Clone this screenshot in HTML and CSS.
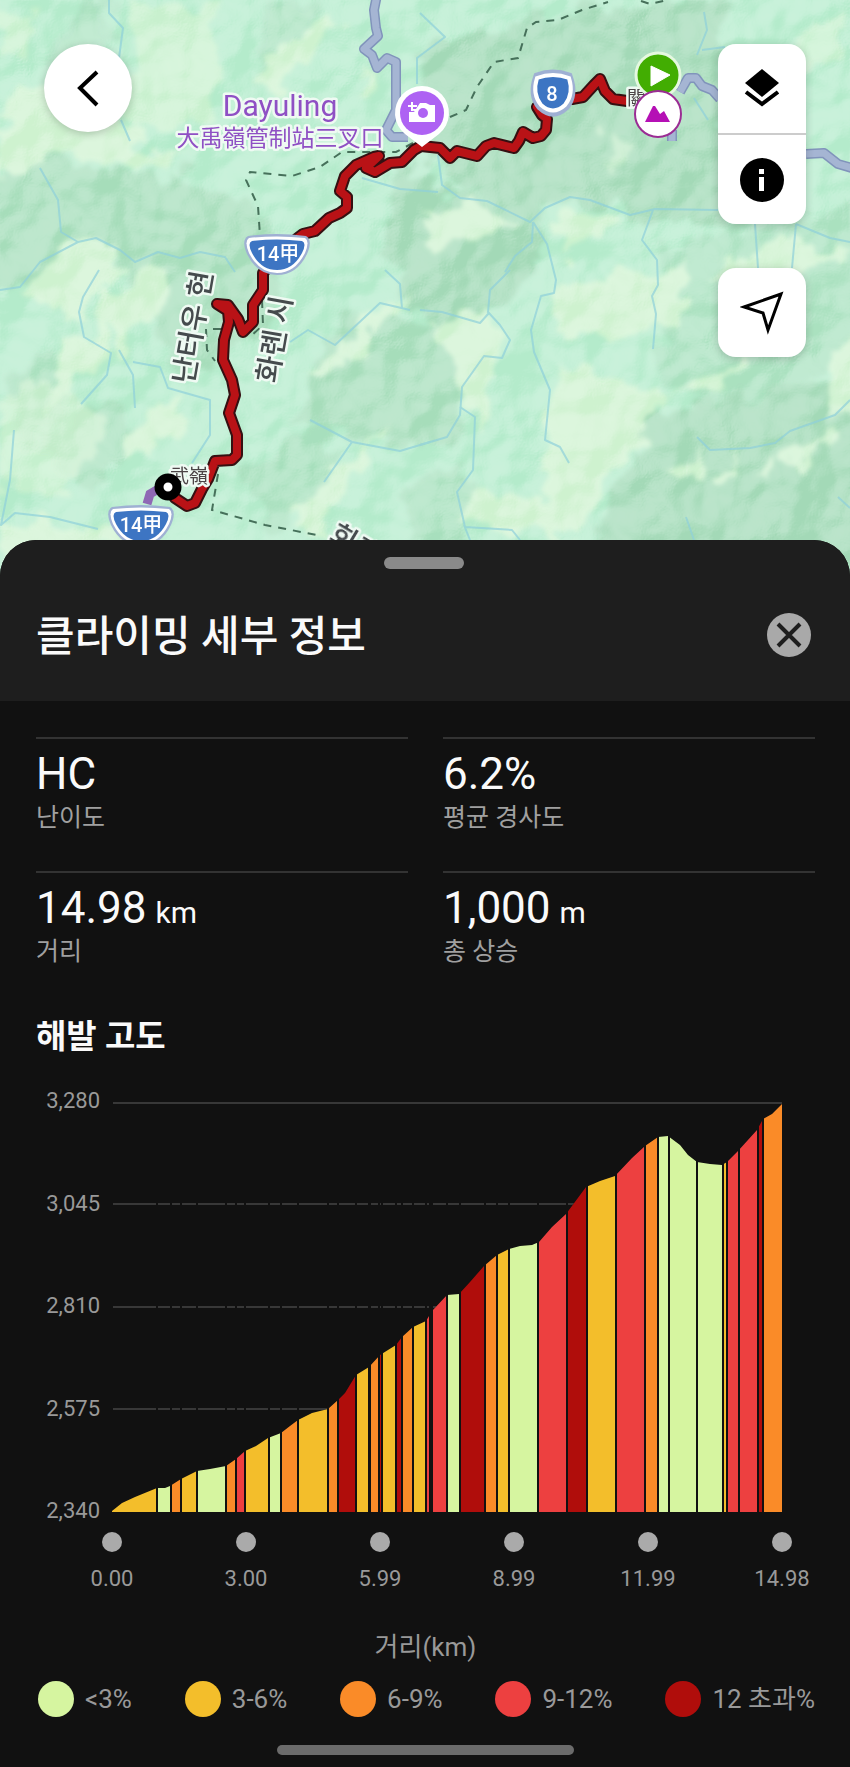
FILE: index.html
```html
<!DOCTYPE html>
<html lang="ko">
<head>
  <meta charset="UTF-8" />
  <meta name="viewport" content="width=device-width, initial-scale=1.0"/>
  <title>클라이밍 세부 정보</title>
  <link rel="stylesheet" href="styles.css">
</head>
<body>
  <div class="map">
    <svg class="map-canvas" viewBox="0 0 850 576" preserveAspectRatio="xMidYMin slice" role="img" aria-label="지도">
      <defs>
        <filter id="terrain" x="-5%" y="-5%" width="110%" height="110%">
          <feTurbulence type="fractalNoise" baseFrequency="0.035" numOctaves="3" seed="4" result="noise"/>
          <feDisplacementMap in="SourceGraphic" in2="noise" scale="44" xChannelSelector="R" yChannelSelector="G"/>
          <feGaussianBlur stdDeviation="2"/>
        </filter>
        <filter id="relief" x="0" y="0" width="100%" height="100%" color-interpolation-filters="sRGB">
          <feTurbulence type="fractalNoise" baseFrequency="0.016" numOctaves="3" seed="11" result="noise"/>
          <feColorMatrix in="noise" type="matrix" values="0 0 0 0 0  0 0 0 0 0  0 0 0 0 0  1 0 0 0 0" result="height"/>
          <feDiffuseLighting in="height" surfaceScale="34" diffuseConstant="0.75" lighting-color="#ffffff">
            <feDistantLight azimuth="225" elevation="42"/>
          </feDiffuseLighting>
        </filter>
        <g id="shield-wide">
          <path d="M-29 -18 Q0 -22 29 -18 Q36 -14 30 0 Q20 21 0 21 Q-20 21 -30 0 Q-36 -14 -29 -18Z" fill="#9fb0d3"/>
          <path d="M-28 -16 Q0 -19 28 -16 Q33 -13 28 -1 Q18 19 0 19 Q-18 19 -28 -1 Q-33 -13 -28 -16Z" fill="#fff"/>
          <path d="M-25 -13 Q0 -16 25 -13 Q30 -11 25 -1 Q16 16 0 16 Q-16 16 -25 -1 Q-30 -11 -25 -13Z" fill="#3d75c3"/>
        </g>
      </defs>

      <!-- terrain -->
      <rect width="850" height="576" fill="#c4f0d7"/>
      <g filter="url(#terrain)">
        <g fill="#b5e2c6">
          <path d="M-10 175 L60 160 L190 178 L250 200 L290 250 L270 330 L180 380 L120 250 L60 280 L-10 290Z" opacity=".8"/>
          <path d="M420 50 L560 10 L720 0 L720 90 L740 230 L640 215 L570 200 L530 220 L460 190 L420 160Z"/>
          <path d="M400 160 L450 190 L540 225 L540 270 L490 310 L430 320 L380 260Z"/>
          <path d="M340 310 L470 330 L460 430 L400 450 L330 420 L290 420Z" opacity=".8"/>
          <path d="M650 410 L720 400 L860 380 L860 570 L580 570 L620 500Z"/>
          <path d="M660 250 L860 200 L860 350 L740 420 L660 380Z" opacity=".6"/>
          <path d="M40 440 L110 400 L150 430 L90 500Z M10 380 L50 350 L70 410 L20 450Z" opacity=".7"/>
          <path d="M240 480 L330 410 L340 480 L280 530Z M410 480 L470 470 L470 540 L410 550Z" opacity=".7"/>
          <path d="M80 0 L115 0 L110 60 L60 120 L40 70Z M280 0 L320 0 L290 60 L250 90Z" opacity=".5"/>
        </g>
        <g fill="#d9f5da">
          <path d="M0 100 L60 70 L150 150 L190 165 L60 158 L0 180Z"/>
          <path d="M130 5 L220 10 L215 120 L130 130Z M0 10 L35 15 L25 60 L0 60Z" opacity=".75"/>
          <path d="M250 75 L320 15 L345 25 L275 90Z M350 100 L385 70 L370 100Z"/>
          <path d="M40 270 L80 240 L105 243 L130 270 L80 315 L20 300Z M100 300 L150 270 L170 290 L120 350Z"/>
          <path d="M60 350 L120 310 L100 360 L50 410Z M120 440 L190 390 L180 430 L130 460Z"/>
          <path d="M300 385 L370 310 L420 290 L350 360Z M290 520 L380 430 L345 500 L320 530Z"/>
          <path d="M420 220 L460 205 L520 225 L440 250Z M560 210 L630 220 L560 260Z"/>
          <path d="M545 290 L690 260 L680 330 L560 340Z M560 370 L665 390 L640 440 L560 550 L540 470Z"/>
          <path d="M430 320 L490 310 L500 380 L475 440 L465 390Z M470 490 L560 500 L570 530 L460 530Z"/>
          <path d="M670 395 L760 350 L720 390Z M700 280 L780 240 L850 260 L770 285Z M670 475 L700 455 L690 480Z M705 475 L735 450 L720 480Z M755 475 L780 450 L770 478Z M780 465 L830 425 L810 460Z"/>
          <path d="M770 55 L850 10 L850 50 L780 95Z M600 130 L640 150 L610 170Z M0 400 L40 380 L110 430 L60 500 L0 490Z" opacity=".7"/>
          <path d="M830 370 L860 330 L860 420 L830 415Z M0 515 L130 530 L100 560 L0 560Z"/>
        </g>
      </g>
      <rect class="relief" width="850" height="576" filter="url(#relief)"/>

      <!-- rivers -->
      <g class="river">
        <path d="M109 0 V13 L123 28 L119 58 M121 120 L130 141"/>
        <path d="M40 168 L58 200 L61 232 L78 242 L96 238 L120 250 L135 262 L158 252 L180 258 L200 252 L225 257 L235 272"/>
        <path d="M0 290 L20 287 L40 262 L78 242 M99 270 L83 297 L79 312 L84 337 L111 353 L107 375 L81 404 M119 350 L133 375 L135 408 M133 362 L160 367 L168 388 L210 400 L210 435 L192 463"/>
        <path d="M14 430 L10 480 L1 525 L15 513 L50 517 L98 529"/>
        <path d="M420 13 L445 37 L417 58 L417 84 M438 155 L442 185 L460 198 L487 201 L530 222 L545 208 L570 197 L590 200 L630 215 L655 209 L718 210"/>
        <path d="M362 178 L400 189 L438 192 M533 222 L547 244 L556 280 L554 293 L541 296 L531 330 L534 352 L550 390 L545 440 L560 447 L569 463"/>
        <path d="M653 210 L642 240 L657 260 L658 285 L652 296 L656 314 L653 349 M755 224 L758 268 M796 224 L792 268 M796 224 L830 238 L850 242"/>
        <path d="M510 270 L490 290 L488 312 L500 325 L510 340 L502 358 L484 356 L462 387 L460 415 L447 437 L420 445 M533 222 L532 242 L515 256 L505 272"/>
        <path d="M420 310 L442 312 L480 323 L489 313 M460 407 L475 417 L473 470 L457 492 L465 527 L512 530 L520 540 M464 525 L470 540"/>
        <path d="M704 12 L707 30 L697 55 M702 50 L725 47 M694 98 L708 120 M697 437 L710 450 L750 448 L775 443 L790 431 L835 415 L850 400"/>
        <path d="M290 342 L308 330 L335 345 L380 303 L410 310 M402 308 L400 284 L385 270 M310 420 L352 442 L400 451 L430 442 M352 442 L324 482 M686 517 L694 540 M838 497 L850 508"/>
      </g>

      <!-- borders -->
      <g class="border">
        <path d="M413 143 L396 152 L342 152 L320 167 L292 176 L250 172 L246 180 L258 206 L260 236"/>
        <path d="M450 117 L466 110 L477 87 L494 62 L518 58 L527 28 L536 22 L558 20 L582 10 L608 2 M641 1 L650 4 L668 0"/>
        <path d="M262 300 L263 325 L250 337 M221 329 L206 329 L207 350 L215 361 M218 474 L212 510 L265 525 L322 536"/>
      </g>

      <!-- roads -->
      <g class="road">
        <path d="M377 -5 L374 10 L376 28 L378 36 L364 49 L372 55 L377 68 L387 58 L396 62 L396 110 L390 122 L386 130 L392 137 L408 137"/>
        <path d="M680 92 L688 78 L696 78 L702 86 L712 90 L720 99 M672 130 V141 M806 154 L824 153 L838 164 L852 168"/>
      </g>
      <g class="road road-inner">
        <path d="M377 -5 L374 10 L376 28 L378 36 L364 49 L372 55 L377 68 L387 58 L396 62 L396 110 L390 122 L386 130 L392 137 L408 137"/>
        <path d="M680 92 L688 78 L696 78 L702 86 L712 90 L720 99 M672 130 V141 M806 154 L824 153 L838 164 L852 168"/>
      </g>
      <path d="M160 488 L150 494 L147 504" fill="none" stroke="#8f68b5" stroke-width="9"/>

      <!-- climb route -->
      <g class="route">
        <path d="M627 101 L613 99 L605 91 L600 79 L594 85 L583 97 L572 99 M537 107 L542 115 L547 119 L546 130 L541 136 L533 138 L523 132 L519 141 L514 148 L494 143 L486 146 L477 156 L457 151 L450 158 L440 148 L421 146 L414 150 L402 162 L390 163 L375 172 L366 168 L379 156 L374 157 L356 165 L345 176 L340 191 L347 197 L347 208 L340 213 L329 218 L315 231 L303 234 L281 251 L263 273 L263 290 L253 305 L253 322 L243 332 L238 319 L228 305 L217 304 L228 311 L229 322 L224 340 L223 360 L232 380 L235 395 L229 413 L237 435 L237 455 L232 460 L215 461 L208 479 L202 489 L195 503 L187 506 L175 498 L168 487"/>
        <path class="route-inner" d="M627 101 L613 99 L605 91 L600 79 L594 85 L583 97 L572 99 M537 107 L542 115 L547 119 L546 130 L541 136 L533 138 L523 132 L519 141 L514 148 L494 143 L486 146 L477 156 L457 151 L450 158 L440 148 L421 146 L414 150 L402 162 L390 163 L375 172 L366 168 L379 156 L374 157 L356 165 L345 176 L340 191 L347 197 L347 208 L340 213 L329 218 L315 231 L303 234 L281 251 L263 273 L263 290 L253 305 L253 322 L243 332 L238 319 L228 305 L217 304 L228 311 L229 322 L224 340 L223 360 L232 380 L235 395 L229 413 L237 435 L237 455 L232 460 L215 461 L208 479 L202 489 L195 503 L187 506 L175 498 L168 487"/>
      </g>

      <!-- place names -->
      <text class="poi" x="280" y="116" font-size="30">Dayuling</text>
      <text class="poi" x="280" y="146" font-size="23">大禹嶺管制站三叉口</text>
      <text class="region" transform="translate(193 385) rotate(-80)">난터우 현</text>
      <text class="region" transform="translate(277 384) rotate(-80)">화롄 시</text>
      <text class="region" transform="translate(327 541) rotate(31)">화롄 시</text>
      <text class="village" x="170" y="483">武嶺</text>
      <text class="village" x="627" y="105">關</text>

      <!-- road shields -->
      <use href="#shield-wide" x="277" y="254"/>
      <text class="shield-text" x="278" y="261">14甲</text>
      <use href="#shield-wide" x="141" y="525"/>
      <text class="shield-text" x="141" y="532">14甲</text>
      <path d="M537 76 Q553 70 569 76 Q576 95 566 107 Q553 119 540 107 Q530 95 537 76Z" fill="#3d75c3" stroke="#9fb0d3" stroke-width="7"/>
      <path d="M537 78 Q553 72 569 78 Q574 94 565 105 Q553 116 541 105 Q532 94 537 78Z" fill="#3d75c3" stroke="#fff" stroke-width="4"/>
      <text class="shield-text" x="552" y="101">8</text>

      <!-- camera pin -->
      <path d="M422 147 L405 134 A27 27 0 1 1 439 134Z" fill="#fff"/>
      <circle cx="422" cy="113" r="22" fill="#ae62f3"/>
      <path d="M411 109 H416 L420 103 H426 L430 105 H435 V122 H409 V112 H415Z" fill="#fff"/>
      <path d="M412 102 V111 M408 106 H417" stroke="#fff" stroke-width="2"/>
      <circle cx="423" cy="113" r="5" fill="#ae62f3"/>

      <!-- climb start and summit -->
      <circle cx="658" cy="75" r="22" fill="#42ad02" stroke="#e5f8e0" stroke-width="3"/>
      <path d="M651 66 L670 75 L651 86Z" fill="#fff" stroke="#fff"/>
      <circle cx="658" cy="114" r="23" fill="#fff" stroke="#9b2c94" stroke-width="2"/>
      <path d="M645 122 L653 106 L655 106 L660 114 L664 111 L670 122Z" fill="#b510b5"/>
      <circle cx="168" cy="487" r="9" fill="#fff" stroke="#000" stroke-width="9"/>
    </svg>

    <button class="map-btn back-btn" type="button" aria-label="뒤로">
      <svg width="44" height="44" viewBox="0 0 44 44"><path d="M31 6 L14 22 L31 39" fill="none" stroke="#000" stroke-width="4"/></svg>
    </button>
    <div class="map-controls">
      <div class="btn-group">
        <button class="map-btn" type="button" aria-label="레이어">
          <svg width="44" height="44" viewBox="0 0 44 44"><path d="M22 2 L39 16 L22 30 L5 16Z"/><path d="M6 25 L22 37 L38 25" fill="none" stroke="#000" stroke-width="4"/></svg>
        </button>
        <button class="map-btn" type="button" aria-label="정보">
          <svg width="44" height="44" viewBox="0 0 44 44"><circle cx="22" cy="22" r="22"/><path d="M19 11 H24 V16 H19Z M19 19 H24 V33 H19Z" fill="#fff"/></svg>
        </button>
      </div>
      <button class="map-btn locate-btn" type="button" aria-label="현재 위치">
        <svg width="44" height="44" viewBox="0 0 44 44"><path d="M4 16 L41 3 L28 39 L23 22Z" fill="none" stroke="#000" stroke-width="3"/></svg>
      </button>
    </div>
  </div>

  <main class="sheet">
    <header class="sheet-header">
      <div class="handle"></div>
      <div class="title-row">
        <h1>클라이밍 세부 정보</h1>
        <button class="close-btn" type="button" aria-label="닫기">
          <svg width="44" height="44" viewBox="0 0 44 44"><circle cx="22" cy="22" r="22" fill="#a9a9a9"/><path d="M11 11 L33 33 M33 11 L11 33" stroke="#1e1e1e" stroke-width="4"/></svg>
        </button>
      </div>
    </header>

    <div class="sheet-body">
      <dl class="stats">
        <div class="stat"><dd>HC</dd><dt>난이도</dt></div>
        <div class="stat"><dd>6.2%</dd><dt>평균 경사도</dt></div>
        <div class="stat"><dd>14.98 <small>km</small></dd><dt>거리</dt></div>
        <div class="stat"><dd>1,000 <small>m</small></dd><dt>총 상승</dt></div>
      </dl>

      <h2>해발 고도</h2>

      <div class="chart">
        <div class="y-axis">
          <span>3,280</span>
          <span>3,045</span>
          <span>2,810</span>
          <span>2,575</span>
          <span>2,340</span>
        </div>
        <div class="chart-main">
          <svg class="plot" viewBox="112 1103 670 410" preserveAspectRatio="none" role="img" aria-label="해발 고도 그래프">
            <defs>
              <clipPath id="profile">
                <path d="M112 1512 L122 1504 L135 1498 L157 1489 L165 1489 L170 1487 L181 1480 L197 1472 L210 1470 L226 1467 L236 1460 L245 1452 L256 1447 L268 1439 L281 1434 L290 1427 L298 1421 L312 1414 L328 1410 L338 1401 L345 1394 L356 1376 L369 1368 L380 1356 L396 1346 L402 1338 L413 1328 L426 1322 L432 1312 L447 1296 L459 1295 L470 1283 L484 1267 L497 1256 L509 1250 L520 1247 L532 1246 L539 1243 L552 1228 L566 1215 L586 1188 L600 1182 L615 1177 L632 1159 L645 1147 L658 1138 L668 1137 L680 1146 L688 1156 L697 1163 L710 1165 L722 1166 L727 1163 L738 1152 L757 1131 L763 1120 L772 1115 L782 1105 V1513 H112Z"/>
              </clipPath>
            </defs>
            <path class="grid" d="M113 1205 H782 M113 1308 H782 M113 1410 H782"/>
            <g clip-path="url(#profile)">
              <rect x="112" y="1103" width="670" height="410" fill="#111"/>
              <path class="g3" d="M112 1103 H157 V1513 H112Z M181 1103 H197 V1513 H181Z M245 1103 H269 V1513 H245Z M298 1103 H328 V1513 H298Z M356 1103 H369 V1513 H356Z M381 1103 H396 V1513 H381Z M413 1103 H426 V1513 H413Z M497 1103 H509 V1513 H497Z M587 1103 H616 V1513 H587Z M723 1103 H727 V1513 H723Z"/>
              <path class="g0" d="M157 1103 H171 V1513 H157Z M197 1103 H226 V1513 H197Z M269 1103 H281 V1513 H269Z M447 1103 H460 V1513 H447Z M509 1103 H538 V1513 H509Z M658 1103 H723 V1513 H658Z"/>
              <path class="g6" d="M171 1103 H181 V1513 H171Z M226 1103 H236 V1513 H226Z M281 1103 H298 V1513 H281Z M328 1103 H338 V1513 H328Z M369 1103 H379 V1513 H369Z M402 1103 H413 V1513 H402Z M485 1103 H497 V1513 H485Z M645 1103 H658 V1513 H645Z M763 1103 H782 V1513 H763Z"/>
              <path class="g9" d="M236 1103 H245 V1513 H236Z M426 1103 H430 V1513 H426Z M432 1103 H447 V1513 H432Z M538 1103 H567 V1513 H538Z M616 1103 H645 V1513 H616Z M727 1103 H758 V1513 H727Z"/>
              <path class="g12" d="M338 1103 H356 V1513 H338Z M379 1103 H382 V1513 H379Z M396 1103 H402 V1513 H396Z M430 1103 H433 V1513 H430Z M460 1103 H485 V1513 H460Z M567 1103 H587 V1513 H567Z M758 1103 H763 V1513 H758Z"/>
            </g>
            <!-- segment gaps -->
            <path class="gaps" d="M157 1106 V1513 M171 1106 V1513 M181 1106 V1513 M197 1106 V1513 M226 1106 V1513 M236 1106 V1513 M245 1106 V1513 M269 1106 V1513 M281 1106 V1513 M298 1106 V1513 M328 1106 V1513 M338 1106 V1513 M356 1106 V1513 M369 1106 V1513 M370 1106 V1513 M379 1106 V1513 M382 1106 V1513 M396 1106 V1513 M402 1106 V1513 M413 1106 V1513 M426 1106 V1513 M430 1106 V1513 M432 1106 V1513 M447 1106 V1513 M460 1106 V1513 M485 1106 V1513 M497 1106 V1513 M509 1106 V1513 M538 1106 V1513 M567 1106 V1513 M587 1106 V1513 M616 1106 V1513 M645 1106 V1513 M658 1106 V1513 M669 1106 V1513 M697 1106 V1513 M723 1106 V1513 M727 1106 V1513 M739 1106 V1513 M758 1106 V1513 M763 1106 V1513"/>
            <path class="grid" d="M113 1104 H782"/>
          </svg>
          <div class="x-axis">
            <span>0.00</span>
            <span>3.00</span>
            <span>5.99</span>
            <span>8.99</span>
            <span>11.99</span>
            <span>14.98</span>
          </div>
        </div>
      </div>
      <p class="axis-title">거리(km)</p>

      <ul class="legend">
        <li><i class="dot dot-0"></i>&lt;3%</li>
        <li><i class="dot dot-3"></i>3-6%</li>
        <li><i class="dot dot-6"></i>6-9%</li>
        <li><i class="dot dot-9"></i>9-12%</li>
        <li><i class="dot dot-12"></i>12 초과%</li>
      </ul>
      <div class="home-bar"></div>
    </div>
  </main>
</body>
</html>
```

FILE: styles.css
```css
* {
  box-sizing: border-box;
}

body {
  margin: 0;
  background: #111;
  color: #fafafa;
  font-family: Roboto, "Noto Sans CJK KR", sans-serif;
}

/* Map */
.map {
  position: relative;
  height: 576px;
}

.map-canvas {
  display: block;
  width: 100%;
  height: 100%;
}

.relief {
  mix-blend-mode: soft-light;
  opacity: 0.35;
}

.river {
  fill: none;
  stroke: #8fd0da;
  stroke-width: 2;
  stroke-linejoin: round;
  opacity: 0.7;
}

.border {
  fill: none;
  stroke: #46705a;
  stroke-width: 2;
  stroke-dasharray: 8 7;
}

.road {
  fill: none;
  stroke: #8194bb;
  stroke-width: 10;
  stroke-linejoin: round;
}

.road-inner {
  stroke: #a5b5d3;
  stroke-width: 7;
}

.route {
  fill: none;
  stroke: #351012;
  stroke-width: 12;
  stroke-linejoin: round;
  stroke-linecap: round;
}

.route-inner {
  stroke: #b91216;
  stroke-width: 8;
}

.poi,
.region,
.village {
  paint-order: stroke;
  stroke: #effaf3;
  stroke-width: 5px;
  stroke-linejoin: round;
}

.poi {
  fill: #8f50c4;
  text-anchor: middle;
  font-family: Roboto, "Noto Sans CJK TC", sans-serif;
}

.region {
  fill: #454b4d;
  font-size: 29px;
  font-weight: 500;
}

.village {
  fill: #4b4446;
  font-size: 19px;
  font-family: "Noto Sans CJK TC", sans-serif;
}

.shield-text {
  fill: #fff;
  font-size: 20px;
  font-weight: 500;
  text-anchor: middle;
  font-family: Roboto, "Noto Sans CJK TC", sans-serif;
}

.map-btn {
  display: flex;
  align-items: center;
  justify-content: center;
  width: 88px;
  height: 89px;
  padding: 0;
  border: none;
  background: #fff;
  cursor: pointer;
}

.back-btn {
  position: absolute;
  top: 44px;
  left: 44px;
  height: 88px;
  border-radius: 50%;
  box-shadow: 0 2px 8px rgba(0, 0, 0, 0.2);
}

.map-controls {
  position: absolute;
  top: 44px;
  right: 44px;
  display: flex;
  flex-direction: column;
  gap: 44px;
}

.btn-group,
.locate-btn {
  border-radius: 18px;
  box-shadow: 0 2px 8px rgba(0, 0, 0, 0.2);
}

.btn-group {
  overflow: hidden;
}

.btn-group .map-btn + .map-btn {
  height: 91px;
  border-top: 2px solid #ccc;
}

/* Bottom sheet */
.sheet {
  position: relative;
  margin-top: -36px;
  border-radius: 36px 36px 0 0;
  background: #111;
  overflow: hidden;
}

.sheet-header {
  padding: 17px 39px 34px 36px;
  background: #1e1e1e;
}

.handle {
  width: 80px;
  height: 12px;
  margin: 0 auto 34px;
  border-radius: 6px;
  background: #8a8a8a;
}

.title-row {
  display: flex;
  align-items: center;
  justify-content: space-between;
}

h1 {
  margin: 0;
  padding-top: 4px;
  font-size: 42px;
  font-weight: 500;
  line-height: 60px;
}

.close-btn {
  padding: 0;
  border: none;
  background: none;
  line-height: 0;
  cursor: pointer;
}

.sheet-body {
  padding: 36px 35px 11px 36px;
}

.stats {
  display: grid;
  grid-template-columns: 1fr 1fr;
  gap: 36px 35px;
  margin: 0;
}

.stat {
  display: flex;
  flex-direction: column;
  padding-top: 9px;
  border-top: 2px solid #333;
}

dd {
  margin: 0;
  font-size: 44px;
  line-height: 53px;
}

dd small {
  margin-left: -2px;
  font-size: 30px;
  line-height: 30px;
}

dt {
  color: #a0a0a0;
  font-size: 25px;
  line-height: 34px;
}

h2 {
  margin: 46px 0 43px;
  font-size: 33px;
  font-weight: 700;
  line-height: 44px;
}

.chart {
  display: flex;
  gap: 12px;
  padding-right: 33px;
  color: #999;
  font-size: 22px;
  line-height: 26px;
}

.y-axis {
  display: flex;
  flex-direction: column;
  justify-content: space-between;
  width: 64px;
  height: 436px;
  margin-top: -14px;
  text-align: right;
}

.chart-main {
  flex: 1;
}

.plot {
  display: block;
  width: 100%;
  height: 410px;
}

.grid {
  fill: none;
  stroke: #383838;
  stroke-width: 2;
}

.gaps {
  fill: none;
  stroke: #111;
  stroke-width: 2;
}

.g0 { fill: #d6f5a0; }
.g3 { fill: #f3be2b; }
.g6 { fill: #fa8b28; }
.g9 { fill: #ed4040; }
.g12 { fill: #b00d0b; }

.x-axis {
  display: flex;
  justify-content: space-between;
  margin: 20px -35px 0;
}

.x-axis span {
  width: 70px;
  text-align: center;
}

.x-axis span::before {
  content: "";
  display: block;
  width: 20px;
  height: 20px;
  margin: 0 auto 14px;
  border-radius: 50%;
  background: #aaa;
}

.axis-title {
  margin: 39px 0 18px;
  color: #999;
  font-size: 26px;
  line-height: 32px;
  text-align: center;
}

.legend {
  display: flex;
  justify-content: space-between;
  margin: 0;
  padding: 0 0 0 2px;
  list-style: none;
  color: #999;
  font-size: 26px;
  line-height: 36px;
}

.legend li {
  display: flex;
  align-items: center;
  gap: 11px;
}

.dot {
  width: 36px;
  height: 36px;
  border-radius: 50%;
}

.dot-0 { background: #d6f5a0; }
.dot-3 { background: #f3be2b; }
.dot-6 { background: #fa8b28; }
.dot-9 { background: #ed4040; }
.dot-12 { background: #b00d0b; }

.home-bar {
  width: 38%;
  height: 10px;
  margin: 28px auto 0;
  border-radius: 5px;
  background: #6b6b6b;
}
```
